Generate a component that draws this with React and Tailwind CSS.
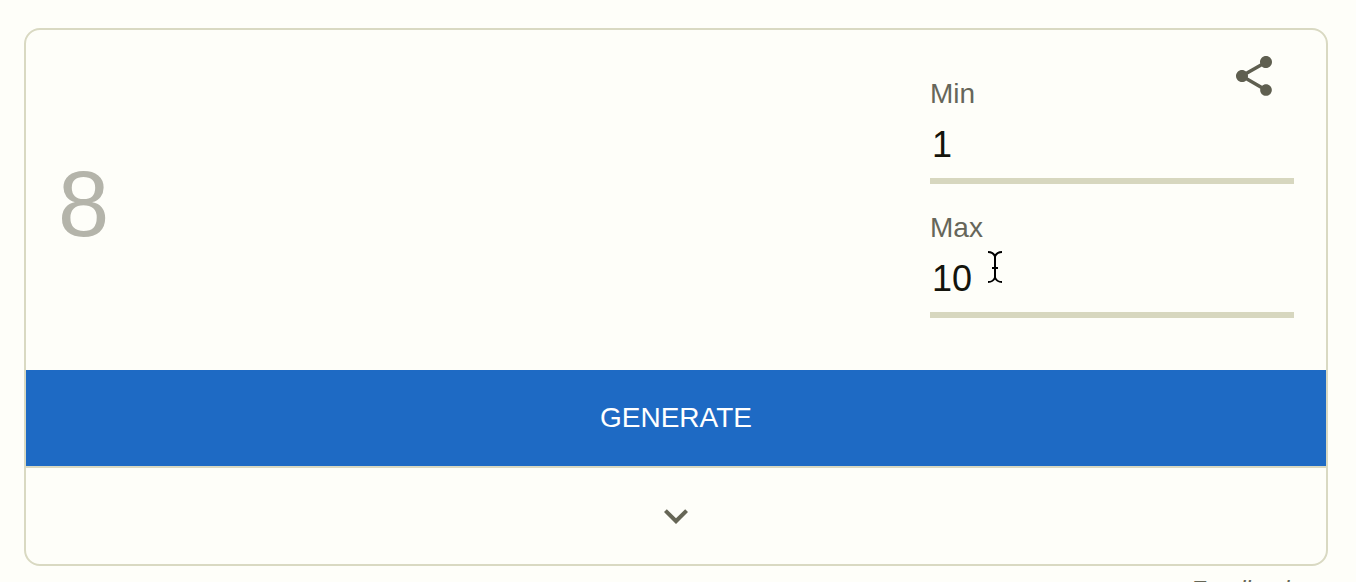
import { useState } from "react";
import { MdExpandMore, MdShare } from "react-icons/md";

function NumberField({ id, label, value, onChange, children }) {
  return (
    <div className="relative flex flex-col gap-0.5">
      <label htmlFor={id} className="text-[28px] leading-8 text-[#66665a]">
        {label}
      </label>
      <input
        id={id}
        type="text"
        inputMode="numeric"
        value={value}
        onChange={(e) => onChange(e.target.value)}
        className="h-[72px] w-full border-b-6 border-[#d7d7bf] bg-transparent px-0.5 text-4xl text-[#14140c] outline-none"
      />
      {children}
    </div>
  );
}

function TextCursor() {
  return (
    <svg
      aria-hidden="true"
      viewBox="0 0 16 34"
      className="pointer-events-none absolute top-[38px] left-[57px] h-[34px] w-4"
      fill="none"
      stroke="#000000"
      strokeWidth="2"
    >
      <path d="M1 2C5 2 7 4 8 6.500V27.500C7 30 5 32 1 32M15 2C11 2 9 4 8 6.500M15 32C11 32 9 30 8 27.500M5 18h6" />
    </svg>
  );
}

export default function App() {
  const [min, setMin] = useState("1");
  const [max, setMax] = useState("10");
  const [result, setResult] = useState(8);

  const generate = () => {
    const low = Number(min);
    const high = Number(max);
    setResult(low + Math.floor(Math.random() * (high - low + 1)));
  };

  return (
    <div className="h-screen overflow-hidden bg-[#fefef9] pt-7 pr-7 pl-6 font-['Liberation_Sans',Arial,sans-serif]">
      <main className="overflow-hidden rounded-2xl border-2 border-[#d9d9c2]">
        <section className="relative flex items-center justify-between pt-12 pr-8 pb-[52px] pl-8">
          <output className="pt-3 text-[92px] leading-none text-[#b4b4aa]">{result}</output>
          <div className="flex w-[29.45%] flex-col gap-7">
            <NumberField id="min" label="Min" value={min} onChange={setMin} />
            <NumberField id="max" label="Max" value={max} onChange={setMax}>
              <TextCursor />
            </NumberField>
          </div>
          <button
            type="button"
            aria-label="Share"
            className="absolute top-[22px] right-12 text-[#5f5f50]"
          >
            <MdShare className="size-12" />
          </button>
        </section>
        <button
          type="button"
          onClick={generate}
          className="block h-24 w-full bg-[#1e6ac4] text-[28px] text-white"
        >
          GENERATE
        </button>
        <button
          type="button"
          aria-label="Show more"
          className="flex h-[98px] w-full items-center justify-center border-t-2 border-[#d9d9c2] text-[#666656]"
        >
          <MdExpandMore className="size-12" />
        </button>
      </main>
      <footer className="flex justify-end pt-2.5 pr-8">
        <a href="#feedback" className="text-2xl leading-7 text-[#666656] italic">
          Feedback
        </a>
      </footer>
    </div>
  );
}
